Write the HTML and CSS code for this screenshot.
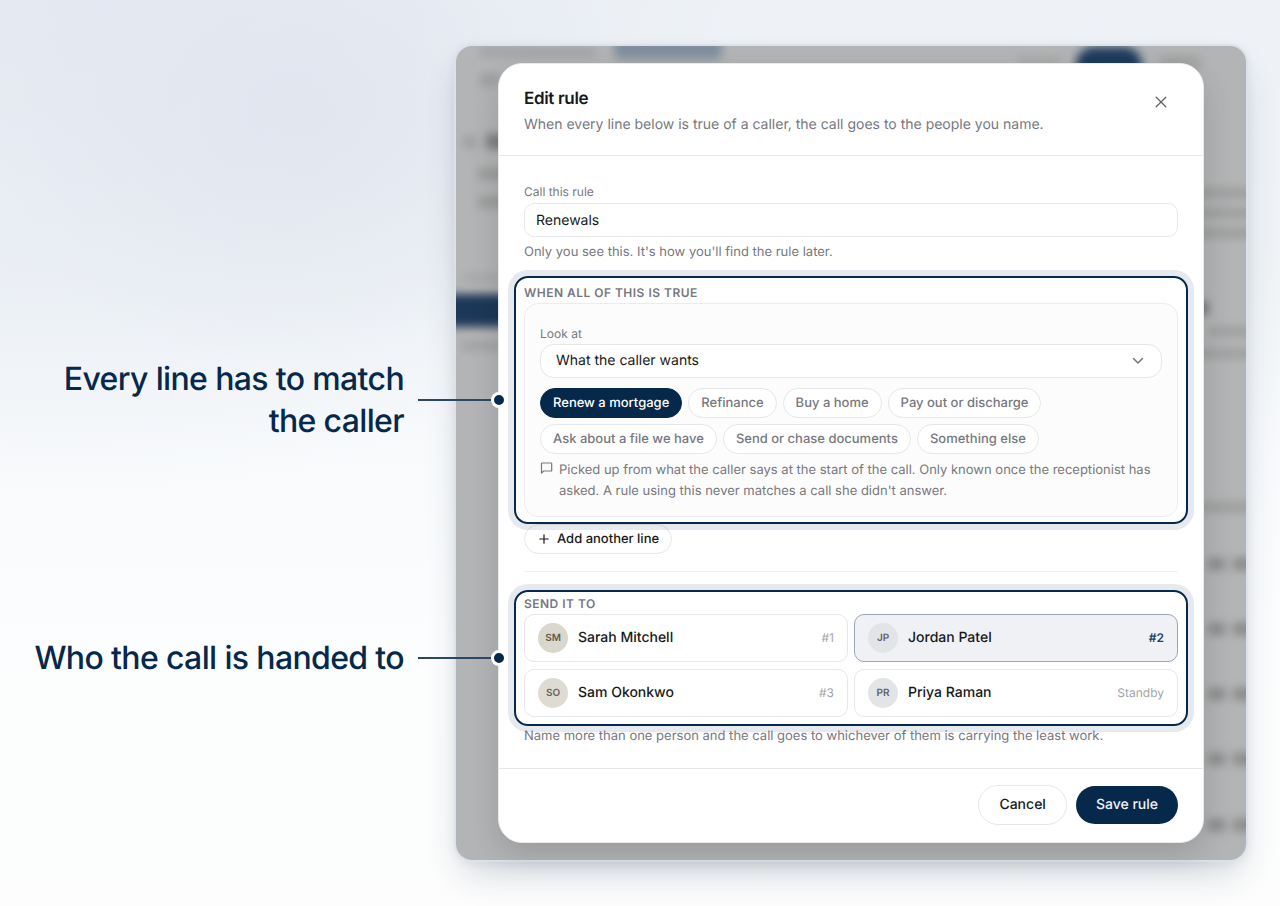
FILE: index.html
```html
<!DOCTYPE html>
<html lang="en">
<head>
<meta charset="utf-8">
<meta name="viewport" content="width=device-width, initial-scale=1">
<title>Edit rule</title>
<link rel="stylesheet" href="styles.css">
</head>
<body>
<main class="stage">
  <div class="frame">
    <div class="backdrop" aria-hidden="true">
      <svg class="backdrop-art" viewBox="0 0 790 814" preserveAspectRatio="none">
        <defs>
          <filter id="soft" x="-20%" y="-50%" width="140%" height="200%"><feGaussianBlur stdDeviation="5"/></filter>
        </defs>
        <g filter="url(#soft)">
          <rect x="24" y="1" width="116" height="10" fill="#a2a3a4"/>
          <rect x="158" y="-8" width="108" height="21" rx="6" fill="#7f8d9d"/>
          <rect x="620" y="1" width="66" height="40" rx="18" fill="#1c3a5c"/>
          <rect x="562" y="10" width="42" height="10" fill="#a8a9a9"/>
          <rect x="704" y="10" width="40" height="14" fill="#a0a1a1"/>
          <rect x="24" y="28" width="20" height="12" fill="#9c9d9d"/>
          <rect x="8" y="90" width="12" height="12" fill="#9c9d9d"/>
          <rect x="30" y="88" width="30" height="15" fill="#7c7e7f"/>
          <rect x="22" y="122" width="30" height="12" fill="#9a9b9b"/>
          <rect x="22" y="150" width="30" height="12" fill="#9a9b9b"/>
          <rect x="6" y="228" width="40" height="8" fill="#a6a7a7"/>
          <rect x="-20" y="248" width="100" height="33" fill="#1b3959"/>
          <rect x="6" y="296" width="40" height="8" fill="#9f9fa0"/>
          <rect x="740" y="142" width="70" height="10" fill="#9c9d9d"/>
          <rect x="740" y="162" width="70" height="10" fill="#9c9d9d"/>
          <rect x="740" y="182" width="70" height="10" fill="#9c9d9d"/>
          <rect x="730" y="256" width="22" height="12" fill="#68696b"/>
          <rect x="752" y="281" width="50" height="9" fill="#9c9d9d"/>
          <rect x="740" y="303" width="60" height="9" fill="#9c9d9d"/>
          <rect x="744" y="456" width="60" height="10" fill="#9c9d9d"/>
          <rect x="752" y="512" width="17" height="12" fill="#88898a"/>
          <rect x="777" y="512" width="28" height="12" fill="#88898a"/>
          <rect x="752" y="577" width="17" height="12" fill="#88898a"/>
          <rect x="777" y="577" width="28" height="12" fill="#88898a"/>
          <rect x="752" y="642" width="17" height="12" fill="#88898a"/>
          <rect x="777" y="642" width="28" height="12" fill="#88898a"/>
          <rect x="752" y="707" width="17" height="12" fill="#88898a"/>
          <rect x="777" y="707" width="28" height="12" fill="#88898a"/>
          <rect x="752" y="773" width="17" height="12" fill="#88898a"/>
          <rect x="777" y="773" width="28" height="12" fill="#88898a"/>
        </g>
      </svg>
    </div>

    <form class="modal" role="dialog" aria-labelledby="dialog-title" aria-describedby="dialog-sub">
      <header class="modal-head">
        <div>
          <h1 class="title" id="dialog-title">Edit rule</h1>
          <p class="subtitle" id="dialog-sub">When every line below is true of a caller, the call goes to the people you name.</p>
        </div>
        <button class="close" type="button" aria-label="Close">
          <svg width="12" height="12" viewBox="0 0 12 12" fill="none" stroke="currentColor" stroke-width="1.3" stroke-linecap="round"><path d="M1.200 1.200l9.600 9.600M10.800 1.200l-9.600 9.600"/></svg>
        </button>
      </header>

      <div class="modal-body">
        <label class="label" for="rule-name">Call this rule</label>
        <input class="input" id="rule-name" type="text" value="Renewals" aria-describedby="rule-hint">
        <p class="hint" id="rule-hint">Only you see this. It's how you'll find the rule later.</p>

        <section class="spot" aria-labelledby="when-title">
          <div class="callout">
            <p class="callout-text">Every line has to match the caller</p>
            <span class="callout-line"></span>
            <span class="callout-dot"></span>
          </div>
          <h2 class="section-title" id="when-title">When all of this is true</h2>
          <div class="panel">
            <label class="label" for="look-at">Look at</label>
            <div class="select-wrap">
              <select class="select" id="look-at">
                <option>What the caller wants</option>
              </select>
              <svg class="chevron" width="12" height="8" viewBox="0 0 12 8" fill="none" stroke="currentColor" stroke-width="1.500" stroke-linecap="round" stroke-linejoin="round"><path d="M1.500 1.500L6 6l4.500-4.500"/></svg>
            </div>
            <div class="chips">
              <button class="chip chip-on" type="button" aria-pressed="true">Renew a mortgage</button>
              <button class="chip" type="button" aria-pressed="false">Refinance</button>
              <button class="chip" type="button" aria-pressed="false">Buy a home</button>
              <button class="chip" type="button" aria-pressed="false">Pay out or discharge</button>
              <button class="chip" type="button" aria-pressed="false">Ask about a file we have</button>
              <button class="chip" type="button" aria-pressed="false">Send or chase documents</button>
              <button class="chip" type="button" aria-pressed="false">Something else</button>
            </div>
            <div class="note">
              <svg class="note-icon" width="13" height="13" viewBox="0 0 13 13" fill="none" stroke="currentColor" stroke-width="1.200" stroke-linejoin="round"><path d="M2.100 1h9a.6.6 0 0 1 .6.6v6.800a.6.6 0 0 1-.6.6H3.700L1.500 11.200V1.600a.6.6 0 0 1 .6-.6z"/></svg>
              <p class="note-text">Picked up from what the caller says at the start of the call. Only known once the receptionist has asked. A rule using this never matches a call she didn't answer.</p>
            </div>
          </div>
        </section>

        <button class="add" type="button">
          <svg width="10" height="10" viewBox="0 0 10 10" fill="none" stroke="currentColor" stroke-width="1.200" stroke-linecap="round"><path d="M5 .8v8.400M.8 5h8.400"/></svg>
          Add another line
        </button>
        <hr class="rule">

        <section class="spot" aria-labelledby="send-title">
          <div class="callout">
            <p class="callout-text">Who the call is handed to</p>
            <span class="callout-line"></span>
            <span class="callout-dot"></span>
          </div>
          <h2 class="section-title" id="send-title">Send it to</h2>
          <div class="people">
            <button class="person" type="button"><span class="avatar avatar-a">SM</span><span class="name">Sarah Mitchell</span><span class="rank">#1</span></button>
            <button class="person person-on" type="button"><span class="avatar">JP</span><span class="name">Jordan Patel</span><span class="rank">#2</span></button>
            <button class="person" type="button"><span class="avatar avatar-b">SO</span><span class="name">Sam Okonkwo</span><span class="rank">#3</span></button>
            <button class="person" type="button"><span class="avatar">PR</span><span class="name">Priya Raman</span><span class="rank">Standby</span></button>
          </div>
        </section>
        <p class="hint hint-last">Name more than one person and the call goes to whichever of them is carrying the least work.</p>
      </div>

      <footer class="modal-foot">
        <button class="btn" type="button">Cancel</button>
        <button class="btn btn-primary" type="submit">Save rule</button>
      </footer>
    </form>
  </div>
</main>
</body>
</html>
```
FILE: styles.css
```css
* { box-sizing: border-box; }

:root {
  --navy: #05284b;
  --ink: #17181a;
  --muted: #77787f;
  --line: #e6e7e9;
}

body {
  margin: 0;
  min-height: 100vh;
  font-family: Inter, "Liberation Sans", sans-serif;
  font-size: 13px;
  line-height: 20px;
  text-rendering: geometricPrecision;
  color: var(--ink);
  background:
    radial-gradient(ellipse 330px 260px at 300px 110px, rgba(222, 227, 238, 0.7), rgba(222, 227, 238, 0)),
    radial-gradient(ellipse 700px 500px at 60px 0, rgba(226, 231, 241, 0.8), rgba(226, 231, 241, 0)),
    linear-gradient(180deg, #eef2f6 0, #eff3f6 260px, #f8fafc 460px, #fcfdfe 640px, #fdfdfd 100%);
}

h1, h2, p { margin: 0; }
button, input, select { font: inherit; color: inherit; margin: 0; text-rendering: inherit; }
button { cursor: pointer; }
svg { display: block; flex: none; }

.stage {
  display: grid;
  grid-template-columns: minmax(0, 1fr);
  padding: 44px 32px 44px 454px;
}

.frame {
  position: relative;
  padding: 17px 42px;
  border: 2px solid #dbe2ea;
  border-radius: 18px;
  box-shadow: 0 18px 36px -8px rgba(20, 40, 70, 0.2), 0 2px 10px rgba(20, 40, 70, 0.06);
}

.backdrop {
  position: absolute;
  inset: 0;
  overflow: hidden;
  border-radius: 16px;
  background: #b3b4b5;
}
.backdrop-art { width: 100%; height: 100%; }

.modal {
  position: relative;
  border: 1px solid #e9eaec;
  border-radius: 24px;
  background: #fff;
  box-shadow: 0 12px 30px rgba(0, 0, 0, 0.14);
}

.modal-head {
  display: flex;
  justify-content: space-between;
  padding: 21px 25px 20px;
  border-bottom: 1px solid var(--line);
}
.title { margin-top: 2px; font-size: 17px; line-height: 24px; font-weight: 600; letter-spacing: -0.02em; }
.subtitle { margin-top: 4px; font-size: 14px; color: var(--muted); }
.close {
  display: grid;
  place-items: center;
  width: 34px;
  height: 34px;
  padding: 0;
  border: 0;
  border-radius: 50%;
  background: none;
  color: #606166;
}

.modal-body { padding: 28px 25px 22px; }
.label { display: block; font-size: 12px; line-height: 16px; color: var(--muted); }
.input {
  display: block;
  width: 100%;
  height: 34px;
  margin-top: 3px;
  padding: 0 11px;
  border: 1px solid var(--line);
  border-radius: 10px;
  background: #fff;
  font-size: 14px;
}
.hint { margin-top: 5px; color: var(--muted); }

.spot {
  position: relative;
  z-index: 1;
  margin: 14px -10px 0;
  padding: 6px 8px 5px;
  border: 2px solid var(--navy);
  border-radius: 14px;
  box-shadow: 0 0 0 6px rgba(5, 40, 75, 0.1);
}
.section-title {
  font-size: 12px;
  line-height: 18px;
  font-weight: 600;
  letter-spacing: 0.04em;
  text-transform: uppercase;
  color: var(--muted);
}

.callout {
  position: absolute;
  top: 50%;
  right: 100%;
  display: flex;
  align-items: center;
  width: 494px;
  margin-right: 9px;
  transform: translateY(-50%);
  color: var(--navy);
}
.callout-text {
  flex: 1;
  font-size: 32px;
  line-height: 42px;
  font-weight: 500;
  letter-spacing: -0.02em;
  text-align: right;
}
.callout-line { flex: none; width: 73px; height: 2px; margin-left: 14px; background: #2b4766; }
.callout-dot {
  flex: none;
  width: 16px;
  height: 16px;
  border: 3px solid #fff;
  border-radius: 50%;
  background: var(--navy);
}

.panel {
  margin-top: 1px;
  padding: 22px 15px 14px;
  border: 1px solid #ececee;
  border-radius: 14px;
  background: #fcfcfc;
}
.select-wrap { position: relative; margin-top: 2px; }
.select {
  display: block;
  width: 100%;
  height: 34px;
  padding: 0 40px 0 15px;
  border: 1px solid var(--line);
  border-radius: 14px;
  background: #fff;
  appearance: none;
  font-size: 14px;
}
.chevron { position: absolute; top: 13px; right: 18px; color: #77787c; pointer-events: none; }

.chips { display: flex; flex-wrap: wrap; gap: 6px; margin-top: 10px; }
.chip {
  height: 30px;
  padding: 0 12px;
  border: 1px solid var(--line);
  border-radius: 15px;
  background: #fff;
  font-weight: 500;
  color: var(--muted);
}
.chip-on { border-color: var(--navy); background: var(--navy); color: #fff; }

.note { display: flex; gap: 6px; margin-top: 6px; color: var(--muted); }
.note-icon { margin-top: 2px; }
.note-text { line-height: 21px; }

.add {
  display: flex;
  align-items: center;
  gap: 8px;
  height: 30px;
  padding: 0 12px 0 14px;
  border: 1px solid var(--line);
  border-radius: 15px;
  background: #fff;
  font-weight: 500;
}
.rule { height: 1px; margin: 17px 0 0; border: 0; background: #f1f2f3; }
.rule + .spot { margin-top: 18px; padding: 3px 8px 7px; }

.people { display: grid; grid-template-columns: 1fr 1fr; gap: 7px 6px; margin-top: 1px; }
.person {
  display: flex;
  align-items: center;
  gap: 10px;
  height: 48px;
  padding: 0 13px;
  border: 1px solid var(--line);
  border-radius: 10px;
  background: #fff;
  text-align: left;
}
.person-on { border-color: #9aa7b8; background: #eff1f5; }
.avatar {
  display: grid;
  place-items: center;
  width: 30px;
  height: 30px;
  border-radius: 50%;
  background: #e3e4e8;
  font-size: 10px;
  font-weight: 600;
  color: #5f6168;
}
.avatar-a { background: #dad7cc; color: #5f5c4c; }
.avatar-b { background: #dedbd3; color: #64615a; }
.name { flex: 1; font-size: 14px; font-weight: 500; }
.rank { font-size: 12px; color: #a3a4a9; }
.person-on .rank { font-weight: 600; color: #25425f; }
.hint-last { margin-top: 0; }

.modal-foot {
  display: flex;
  align-items: center;
  justify-content: flex-end;
  gap: 9px;
  padding: 16px 25px 17px;
  border-top: 1px solid var(--line);
}
.btn {
  height: 40px;
  padding: 0 20px;
  border: 1px solid var(--line);
  border-radius: 20px;
  background: #fff;
  font-size: 14px;
  font-weight: 500;
}
.btn-primary { height: 38px; border: 0; background: var(--navy); color: #eef2f6; }
```
